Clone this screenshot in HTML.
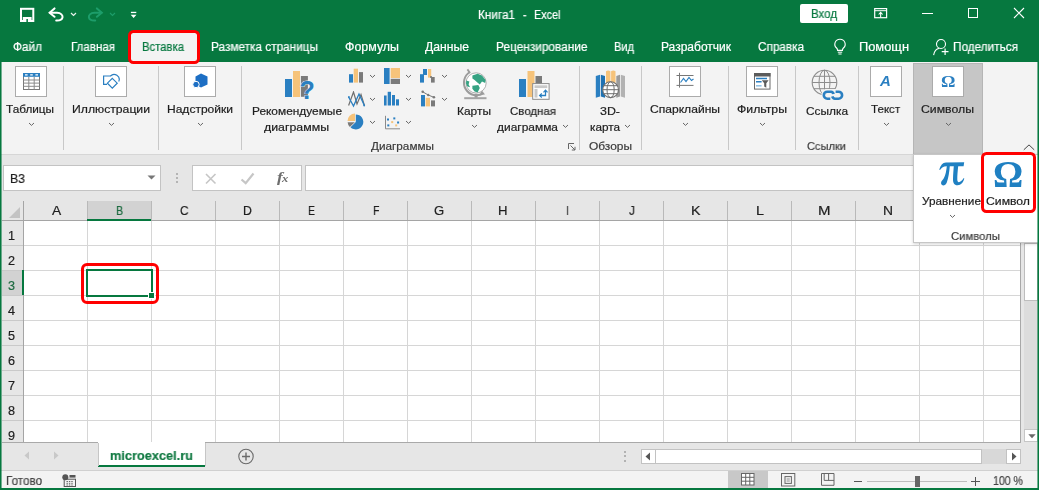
<!DOCTYPE html>
<html lang="ru"><head><meta charset="utf-8"><title>Excel</title>
<style>
html,body{margin:0;padding:0;background:#fff;}
body{width:1039px;height:490px;overflow:hidden;position:relative;font-family:"Liberation Sans",sans-serif;}
#r{position:absolute;left:0;top:0;width:1039px;height:490px;overflow:hidden;background:#fff;}
.b{position:absolute;display:block;margin:0;padding:0;}
.t{-webkit-text-stroke:0.2px currentColor;will-change:transform;position:absolute;display:block;white-space:nowrap;line-height:16px;height:16px;transform-origin:0 50%;font-family:"Liberation Sans",sans-serif;}
</style></head>
<body><div id="r">
<div class="b" style="left:0px;top:0px;width:1039px;height:62px;background:#06783f;"></div>
<div class="b" style="left:0px;top:62px;width:1039px;height:92px;background:#f3f3f3;"></div>
<div class="b" style="left:0px;top:154px;width:1039px;height:47px;background:#e6e6e6;"></div>
<div class="b" style="left:0px;top:154px;width:1039px;height:1px;background:#d6d6d6;"></div>
<div class="b" style="left:0px;top:201px;width:1039px;height:20px;background:#e6e6e6;"></div>
<div class="b" style="left:0px;top:221px;width:1039px;height:221px;background:#fff;"></div>
<div class="b" style="left:0px;top:442px;width:1039px;height:28px;background:#e6e6e6;"></div>
<div class="b" style="left:0px;top:470px;width:1039px;height:18px;background:#f3f3f3;"></div>
<svg class="b" style="left:19px;top:7px" width="16" height="16" viewBox="0 0 16 16"><rect x="2" y="1.8" width="12.3" height="12.2" fill="none" stroke="#fff" stroke-width="2"/><rect x="3.8" y="10" width="8.8" height="4.2" fill="#fff"/><rect x="7.4" y="12" width="1.5" height="3" fill="#06783f"/></svg>
<svg class="b" style="left:48px;top:7px" width="17" height="16" viewBox="0 0 17 16"><path d="M2 5.8 H9 C13 5.8 15 8.5 14.5 10.5 C14 12.5 11.5 13.7 8.2 13.5" fill="none" stroke="#fff" stroke-width="2" stroke-linecap="round"/><path d="M6.5 1.4 L1.6 5.8 L6.5 9.8" fill="none" stroke="#fff" stroke-width="2" stroke-linecap="round" stroke-linejoin="miter"/></svg>
<svg class="b" style="left:69.5px;top:12.05px" width="7" height="4.5" viewBox="0 0 7 4.5"><path d="M1 1 L3.5 3.5 L6 1" fill="none" stroke="#e8f2ec" stroke-width="1.2"/></svg>
<svg class="b" style="left:87px;top:7px" width="17" height="16" viewBox="0 0 17 16"><path d="M14.4 5.8 H7.4 C3.4 5.8 1.4 8.5 1.9 10.5 C2.4 12.5 4.9 13.7 8.2 13.5" fill="none" stroke="#1d9d6a" stroke-width="2" stroke-linecap="round"/><path d="M9.9 1.4 L14.8 5.8 L9.9 9.8" fill="none" stroke="#1d9d6a" stroke-width="2" stroke-linecap="round"/></svg>
<svg class="b" style="left:108.9px;top:12.05px" width="7" height="4.5" viewBox="0 0 7 4.5"><path d="M1 1 L3.5 3.5 L6 1" fill="none" stroke="#1d9d6a" stroke-width="1.1"/></svg>
<svg class="b" style="left:129px;top:10px" width="9" height="10" viewBox="0 0 9 10"><rect x="1.9" y="1.8" width="5.4" height="1.3" fill="#fff"/><path d="M1.7 4.8 H7.5 L4.6 8 Z" fill="#fff"/></svg>
<div class="b" style="left:800px;top:4px;width:48px;height:19px;background:#fff;border-radius:2px;"></div>
<svg class="b" style="left:874px;top:8px" width="14" height="11" viewBox="0 0 14 11"><rect x="0.7" y="0.6" width="11.9" height="9.1" fill="none" stroke="#fff" stroke-width="1.2"/><path d="M0.7 2.7 H12.6" stroke="#fff" stroke-width="1"/><path d="M6.65 9.2 V4.6 M4.7 6.5 L6.65 4.4 L8.6 6.5" fill="none" stroke="#fff" stroke-width="1.1"/></svg>
<div class="b" style="left:922px;top:13px;width:11px;height:1px;background:#fff;"></div>
<div class="b" style="left:968px;top:8px;width:10px;height:10px;border:1px solid #fff;box-sizing:border-box;"></div>
<svg class="b" style="left:1013px;top:7px" width="12" height="12" viewBox="0 0 12 12"><path d="M1 1 L11 11 M11 1 L1 11" stroke="#fff" stroke-width="1.1"/></svg>
<div class="b" style="left:131px;top:33px;width:66px;height:29px;background:#f3f3f3;"></div>
<svg class="b" style="left:833px;top:38px" width="14" height="18" viewBox="0 0 14 18"><path d="M7 1.2 A5 5 0 0 0 3.6 10 Q4.6 11 4.6 12.4 H9.4 Q9.4 11 10.4 10 A5 5 0 0 0 7 1.2 Z" fill="none" stroke="#fff" stroke-width="1.1"/><path d="M4.8 14.2 H9.2 M5.4 16 H8.6" stroke="#fff" stroke-width="1"/></svg>
<svg class="b" style="left:932px;top:38px" width="18" height="18" viewBox="0 0 18 18"><circle cx="9" cy="6" r="4.5" fill="none" stroke="#fff" stroke-width="1.1"/><path d="M1.6 17.2 Q2.6 11.2 7.4 10.3" fill="none" stroke="#fff" stroke-width="1.1"/><path d="M13.1 10.4 V17 M9.7 13.7 H16.5" stroke="#fff" stroke-width="1.2"/></svg>
<div class="b" style="left:63px;top:66px;width:1px;height:84px;background:#c8c8c8;"></div>
<div class="b" style="left:158px;top:66px;width:1px;height:84px;background:#c8c8c8;"></div>
<div class="b" style="left:241px;top:66px;width:1px;height:84px;background:#c8c8c8;"></div>
<div class="b" style="left:579px;top:66px;width:1px;height:84px;background:#c8c8c8;"></div>
<div class="b" style="left:641px;top:66px;width:1px;height:84px;background:#c8c8c8;"></div>
<div class="b" style="left:728px;top:66px;width:1px;height:84px;background:#c8c8c8;"></div>
<div class="b" style="left:795px;top:66px;width:1px;height:84px;background:#c8c8c8;"></div>
<div class="b" style="left:858px;top:66px;width:1px;height:84px;background:#c8c8c8;"></div>
<div class="b" style="left:913px;top:63px;width:70px;height:91px;background:#c6c6c6;border-left:1px solid #b5b5b5;border-right:1px solid #b5b5b5;border-top:1px solid #b5b5b5;box-sizing:border-box;"></div>
<div class="b" style="left:15px;top:66px;width:32px;height:31px;background:#fff;border:1px solid #ababab;box-sizing:border-box;"></div>
<div class="b" style="left:95px;top:66px;width:32px;height:31px;background:#fff;border:1px solid #ababab;box-sizing:border-box;"></div>
<div class="b" style="left:184px;top:66px;width:32px;height:31px;background:#fff;border:1px solid #ababab;box-sizing:border-box;"></div>
<div class="b" style="left:669px;top:66px;width:32px;height:31px;background:#fff;border:1px solid #ababab;box-sizing:border-box;"></div>
<div class="b" style="left:746px;top:66px;width:32px;height:31px;background:#fff;border:1px solid #ababab;box-sizing:border-box;"></div>
<div class="b" style="left:870px;top:66px;width:32px;height:31px;background:#fff;border:1px solid #ababab;box-sizing:border-box;"></div>
<div class="b" style="left:932px;top:66px;width:32px;height:31px;background:#fff;border:1px solid #ababab;box-sizing:border-box;"></div>
<svg class="b" style="left:27.5px;top:122.3px" width="7" height="4.4" viewBox="0 0 7 4.4"><path d="M1 1 L3.5 3.4 L6 1" fill="none" stroke="#646464" stroke-width="1"/></svg>
<svg class="b" style="left:107.5px;top:122.3px" width="7" height="4.4" viewBox="0 0 7 4.4"><path d="M1 1 L3.5 3.4 L6 1" fill="none" stroke="#646464" stroke-width="1"/></svg>
<svg class="b" style="left:196.5px;top:122.3px" width="7" height="4.4" viewBox="0 0 7 4.4"><path d="M1 1 L3.5 3.4 L6 1" fill="none" stroke="#646464" stroke-width="1"/></svg>
<svg class="b" style="left:681.5px;top:122.3px" width="7" height="4.4" viewBox="0 0 7 4.4"><path d="M1 1 L3.5 3.4 L6 1" fill="none" stroke="#646464" stroke-width="1"/></svg>
<svg class="b" style="left:758.5px;top:122.3px" width="7" height="4.4" viewBox="0 0 7 4.4"><path d="M1 1 L3.5 3.4 L6 1" fill="none" stroke="#646464" stroke-width="1"/></svg>
<svg class="b" style="left:882.5px;top:122.3px" width="7" height="4.4" viewBox="0 0 7 4.4"><path d="M1 1 L3.5 3.4 L6 1" fill="none" stroke="#646464" stroke-width="1"/></svg>
<svg class="b" style="left:944.5px;top:122.3px" width="7" height="4.4" viewBox="0 0 7 4.4"><path d="M1 1 L3.5 3.4 L6 1" fill="none" stroke="#646464" stroke-width="1"/></svg>
<svg class="b" style="left:470.5px;top:124.3px" width="7" height="4.4" viewBox="0 0 7 4.4"><path d="M1 1 L3.5 3.4 L6 1" fill="none" stroke="#646464" stroke-width="1"/></svg>
<svg class="b" style="left:561.7px;top:124.3px" width="7" height="4.4" viewBox="0 0 7 4.4"><path d="M1 1 L3.5 3.4 L6 1" fill="none" stroke="#646464" stroke-width="1"/></svg>
<svg class="b" style="left:623.7px;top:124.3px" width="7" height="4.4" viewBox="0 0 7 4.4"><path d="M1 1 L3.5 3.4 L6 1" fill="none" stroke="#646464" stroke-width="1"/></svg>
<svg class="b" style="left:368.5px;top:74.1px" width="7" height="4.4" viewBox="0 0 7 4.4"><path d="M1 1 L3.5 3.4 L6 1" fill="none" stroke="#646464" stroke-width="1"/></svg>
<svg class="b" style="left:404.5px;top:74.1px" width="7" height="4.4" viewBox="0 0 7 4.4"><path d="M1 1 L3.5 3.4 L6 1" fill="none" stroke="#646464" stroke-width="1"/></svg>
<svg class="b" style="left:440.5px;top:74.1px" width="7" height="4.4" viewBox="0 0 7 4.4"><path d="M1 1 L3.5 3.4 L6 1" fill="none" stroke="#646464" stroke-width="1"/></svg>
<svg class="b" style="left:368.5px;top:97.0px" width="7" height="4.4" viewBox="0 0 7 4.4"><path d="M1 1 L3.5 3.4 L6 1" fill="none" stroke="#646464" stroke-width="1"/></svg>
<svg class="b" style="left:404.5px;top:97.0px" width="7" height="4.4" viewBox="0 0 7 4.4"><path d="M1 1 L3.5 3.4 L6 1" fill="none" stroke="#646464" stroke-width="1"/></svg>
<svg class="b" style="left:440.5px;top:97.0px" width="7" height="4.4" viewBox="0 0 7 4.4"><path d="M1 1 L3.5 3.4 L6 1" fill="none" stroke="#646464" stroke-width="1"/></svg>
<svg class="b" style="left:368.5px;top:120.0px" width="7" height="4.4" viewBox="0 0 7 4.4"><path d="M1 1 L3.5 3.4 L6 1" fill="none" stroke="#646464" stroke-width="1"/></svg>
<svg class="b" style="left:404.5px;top:120.0px" width="7" height="4.4" viewBox="0 0 7 4.4"><path d="M1 1 L3.5 3.4 L6 1" fill="none" stroke="#646464" stroke-width="1"/></svg>
<svg class="b" style="left:1023px;top:144px" width="12" height="7" viewBox="0 0 12 7"><path d="M0.8 5.8 L6 0.9 L11.2 5.8" fill="none" stroke="#444" stroke-width="1"/></svg>
<svg class="b" style="left:568px;top:143px" width="8" height="8" viewBox="0 0 8 8"><path d="M0.5 6 V0.5 H6" fill="none" stroke="#666" stroke-width="1"/><path d="M2.5 2.5 L7 7 M7 3.8 V7 H3.8" fill="none" stroke="#666" stroke-width="1"/></svg>
<svg class="b" style="left:22.6px;top:72.6px" width="18" height="18" viewBox="0 0 18 18"><rect x="0.5" y="0.5" width="16" height="16" fill="#fff" stroke="#787878" stroke-width="1"/><rect x="0" y="0" width="17" height="3.8" fill="#2a7fc1"/><path d="M0.5 7 H16.5 M0.5 10.1 H16.5 M0.5 13.3 H16.5 M5.8 3.8 V16.5 M11.2 3.8 V16.5" stroke="#8a8a8a" stroke-width="1"/><path d="M2 1.9 H4.6 M7.2 1.9 H9.8 M12.4 1.9 H15" stroke="#fff" stroke-width="1.1"/></svg>
<svg class="b" style="left:102px;top:72px" width="18" height="18" viewBox="0 0 18 18"><path d="M8.8 4 H1.6 V12.3 H5" fill="none" stroke="#2a7fc1" stroke-width="1.2"/><path d="M8.4 4.2 A5 5 0 0 1 16.7 9.6" fill="none" stroke="#2a7fc1" stroke-width="1.2"/><path d="M10.3 6.3 L15.2 11.2 L10.3 16.1 L5.4 11.2 Z" fill="#fff" stroke="#2a7fc1" stroke-width="1.2"/></svg>
<svg class="b" style="left:192px;top:73px" width="17" height="16" viewBox="0 0 17 16"><path d="M9 0.5 L15.5 3.5 V11.5 L9 14.5 L3.5 11.5 V3.5 Z" fill="#1d6fc4"/><circle cx="4" cy="11.5" r="3.2" fill="#1d6fc4" stroke="#fff" stroke-width="1"/></svg>
<svg class="b" style="left:284px;top:70px" width="32" height="32" viewBox="0 0 32 32"><rect x="1" y="9" width="7" height="18" fill="#2a7fc1"/><rect x="9" y="1" width="7" height="26" fill="#f6c37a"/><rect x="16.9" y="6" width="7" height="20.8" fill="#7a7a7a"/><text x="15.5" y="29" font-family="Liberation Sans" font-weight="bold" font-size="25" fill="#2a7fc1" stroke="#f3f3f3" stroke-width="0.8" paint-order="stroke">?</text></svg>
<svg class="b" style="left:348px;top:68px" width="17" height="17" viewBox="0 0 17 17"><rect x="1" y="6.2" width="4" height="8.4" fill="#2a7fc1"/><rect x="5.7" y="0.7" width="4.3" height="13.9" fill="#f6c37a"/><rect x="11" y="4.1" width="4" height="10.5" fill="#7a7a7a"/></svg>
<svg class="b" style="left:383px;top:67px" width="18" height="18" viewBox="0 0 18 18"><rect x="1" y="1" width="5.6" height="16" fill="#2a7fc1"/><rect x="7.7" y="1" width="9.3" height="10" fill="#f6c37a"/><rect x="7.7" y="11.8" width="9.3" height="5.2" fill="#7a7a7a"/></svg>
<svg class="b" style="left:419px;top:68px" width="18" height="17" viewBox="0 0 18 17"><rect x="1" y="6.2" width="4" height="8.4" fill="#2a7fc1"/><rect x="4" y="1" width="4" height="6" fill="#2a7fc1"/><rect x="9" y="1" width="3.2" height="8.6" fill="#f6c37a"/><rect x="12" y="9" width="3.7" height="5.6" fill="#7a7a7a"/><rect x="11" y="8.2" width="2" height="1.6" fill="#7a7a7a"/></svg>
<svg class="b" style="left:347.5px;top:91px" width="18" height="17" viewBox="0 0 18 17"><path d="M0.6 14.5 L5.5 1 L9 13 L13 3.5 L16.4 14.5" fill="none" stroke="#6e6e6e" stroke-width="1.2"/><path d="M0.6 6 L5.5 15 L11 3 L16.4 14.5" fill="none" stroke="#2a7fc1" stroke-width="1.3"/><circle cx="0.9" cy="6" r="0.9" fill="#2a7fc1"/><circle cx="16.2" cy="14.6" r="0.9" fill="#2a7fc1"/></svg>
<svg class="b" style="left:383px;top:91px" width="17" height="16" viewBox="0 0 17 16"><rect x="1" y="4.5" width="2.6" height="10" fill="#2a7fc1"/><rect x="4.7" y="0.8" width="3.3" height="13.7" fill="#2a7fc1"/><rect x="9" y="4" width="3" height="10.5" fill="#2a7fc1"/><rect x="13" y="8.3" width="3" height="6.2" fill="#2a7fc1"/></svg>
<svg class="b" style="left:419px;top:90px" width="18" height="18" viewBox="0 0 18 18"><rect x="2" y="5" width="4" height="11.4" fill="#2a7fc1"/><rect x="6.7" y="7.8" width="4.3" height="8.6" fill="#f6c37a"/><rect x="12" y="10.4" width="4" height="6" fill="#7a7a7a"/><path d="M3.7 1.8 L9.2 5 L14.9 7.3" fill="none" stroke="#7a7a7a" stroke-width="1"/><circle cx="3.7" cy="1.8" r="1.3" fill="#7a7a7a"/><circle cx="9.2" cy="5" r="1.2" fill="#7a7a7a"/><circle cx="14.9" cy="7.3" r="1.3" fill="#7a7a7a"/></svg>
<svg class="b" style="left:347px;top:113px" width="18" height="18" viewBox="0 0 18 18"><path d="M8.8 8.9 L8.8 1.4 A7.5 7.5 0 1 1 3.5 14.2 Z" fill="#2a7fc1"/><path d="M8 8 L0.5 8 A7.5 7.5 0 0 1 8 0.5 Z" fill="#f6c37a"/><path d="M7.8 9.3 L0.6 9.3 A7.5 7.5 0 0 0 2.8 14 Z" fill="#7a7a7a"/></svg>
<svg class="b" style="left:383.7px;top:114.5px" width="18" height="16" viewBox="0 0 18 16"><path d="M1.5 0.8 V13.8 H16" fill="none" stroke="#8a8a8a" stroke-width="1"/><rect x="3" y="3.5" width="2" height="2" fill="#2a7fc1"/><rect x="7.2" y="6.1" width="2" height="2" fill="#f6c37a"/><rect x="9.3" y="2.4" width="2" height="2" fill="#2a7fc1"/><rect x="13.1" y="6.5" width="2" height="2" fill="#2a7fc1"/><rect x="3.3" y="9.4" width="2" height="2" fill="#2a7fc1"/><rect x="11.2" y="9.4" width="2" height="2" fill="#f6c37a"/></svg>
<svg class="b" style="left:460px;top:67px" width="30" height="34" viewBox="0 0 30 34"><path d="M9.8 5 A12.5 12.5 0 1 0 23.3 26.3" fill="none" stroke="#9c9c9c" stroke-width="2"/><path d="M7.4 2.4 L10 6" stroke="#9c9c9c" stroke-width="1.8"/><path d="M21.5 23 L25 27.5 L20 27.6 Z" fill="#9c9c9c"/><circle cx="16.1" cy="15.9" r="10.1" fill="#fff" stroke="#a8a8a8" stroke-width="0.9"/><path d="M12.4 8.4 L17.6 6.7 L22 8.4 L25.6 12.9 L25.2 15.9 L22 14.4 L19.8 17.4 L16.8 15.1 L14.6 12.9 L12.4 11.4 Z" fill="#36a383"/><path d="M12.4 18.8 L18.3 18.1 L19.8 21.1 L17.6 25.4 L14.6 24.6 L12.4 21.8 Z" fill="#36a383"/><path d="M6.3 13.6 L9.4 14.4 L8.6 17.4 L10.1 20.3 L7.3 19.6 L6 16.6 Z" fill="#36a383"/><rect x="14.6" y="26.8" width="3" height="4" fill="#9c9c9c"/><rect x="4.2" y="30.2" width="22.3" height="2" fill="#a4a4a4"/></svg>
<svg class="b" style="left:518px;top:70px" width="33" height="32" viewBox="0 0 33 32"><rect x="1" y="9" width="7" height="18" fill="#2a7fc1"/><rect x="9.5" y="1" width="7" height="26" fill="#f6c37a"/><rect x="17.5" y="6" width="6.5" height="8" fill="#7a7a7a"/><rect x="14.7" y="13.6" width="16.4" height="15.7" fill="#fff" stroke="#8a8a8a" stroke-width="1"/><rect x="16.5" y="15.3" width="12.8" height="2.8" fill="#c9c9c9"/><rect x="16.5" y="19" width="3" height="8.6" fill="#c9c9c9"/><path d="M22 25.5 H27.5 V20.5" fill="none" stroke="#2a7fc1" stroke-width="1.3"/><path d="M23.8 23.5 L21.6 25.5 L23.8 27.5 M25.5 22.4 L27.5 20.2 L29.5 22.4" fill="none" stroke="#2a7fc1" stroke-width="1.2"/></svg>
<svg class="b" style="left:595px;top:69px" width="31" height="30" viewBox="0 0 31 30"><path d="M0.8 7 L5 5.7 V27.5 L0.8 28.8 Z" fill="#2a7fc1"/><path d="M5.8 5.7 L10 7 V28.8 L5.8 27.5 Z" fill="#1f72b3"/><path d="M11 2.2 Q13.2 0.6 15.4 2.2 V21 H11 Z" fill="#f6c37a"/><path d="M16.1 2.2 Q18.3 0.6 20.5 2.2 V21 H16.1 Z" fill="#f6c37a"/><path d="M21.3 7 L25 5.7 V27.5 L21.3 28.8 Z" fill="#9b9b9b"/><path d="M25.8 5.7 L30 7 V28.8 L25.8 27.5 Z" fill="#b2b2b2"/><circle cx="15.6" cy="20.7" r="7.9" fill="#fff" stroke="#6e6e6e" stroke-width="1.1"/><ellipse cx="15.6" cy="20.7" rx="3.6" ry="7.9" fill="none" stroke="#6e6e6e" stroke-width="1"/><path d="M7.7 20.7 H23.5 M8.9 16.7 H22.3 M8.9 24.7 H22.3" stroke="#6e6e6e" stroke-width="1"/></svg>
<svg class="b" style="left:676px;top:72px" width="19" height="18" viewBox="0 0 19 18"><path d="M3.5 0.8 V15.6 M0.5 3.5 H17.5 M0.5 13.4 H17.5" fill="none" stroke="#777" stroke-width="1"/><path d="M4.5 10.5 L7.5 6.5 L10 9.5 L13 5.5 L15.5 8.5 L17.5 7" fill="none" stroke="#2a7fc1" stroke-width="1.1"/></svg>
<svg class="b" style="left:754px;top:72.5px" width="17" height="17" viewBox="0 0 17 17"><rect x="0.5" y="0.5" width="15.5" height="15.6" fill="#fff" stroke="#6a6a6a" stroke-width="1"/><rect x="0" y="0" width="16.5" height="3.5" fill="#5c5c5c"/><path d="M2 5.4 H13 M2 8.8 H7.6" stroke="#2a7fc1" stroke-width="1.5"/><path d="M2 12.8 H7.6" stroke="#8fc1e6" stroke-width="1.5"/><path d="M7.8 7.3 H14.6 L12.3 10.3 V14.7 L10.2 13.5 V10.3 Z" fill="#5c5c5c"/></svg>
<svg class="b" style="left:811px;top:69px" width="36" height="33" viewBox="0 0 36 33"><circle cx="13.5" cy="13.5" r="12.3" fill="#f3f3f3" stroke="#8c8c8c" stroke-width="1.1"/><ellipse cx="13.5" cy="13.5" rx="5.5" ry="12.3" fill="none" stroke="#8c8c8c" stroke-width="1"/><path d="M13.5 1.2 V25.8 M1.2 13.5 H25.8 M3 7.3 H24 M3 19.7 H24" stroke="#8c8c8c" stroke-width="1"/><rect x="10.5" y="20" width="23" height="13" rx="5" fill="#f3f3f3"/><path d="M19.3 29.7 H16.3 A3.2 3.2 0 0 1 16.3 22.7 H20 A3 3 0 0 1 22.6 25" fill="none" stroke="#2a7fc1" stroke-width="2.6"/><path d="M24.6 22.7 H27.6 A3.2 3.2 0 0 1 27.6 29.7 H24 A3 3 0 0 1 21.3 27.4" fill="none" stroke="#2a7fc1" stroke-width="2.6"/></svg>
<span class="b" style="left:880px;top:71px;font:bold italic 15px 'Liberation Sans',sans-serif;color:#2a7fc1;line-height:20px;will-change:transform">A</span>
<span class="b" style="left:941px;top:71.5px;font:bold 17px 'Liberation Serif',serif;color:#2a7fc1;line-height:20px;will-change:transform;transform-origin:0 0;transform:scaleX(1.06)">&#937;</span>
<div class="b" style="left:3px;top:165px;width:158px;height:25.5px;background:#fff;border:1px solid #c3c3c3;box-sizing:border-box;"></div>
<svg class="b" style="left:147px;top:175px" width="9" height="5" viewBox="0 0 9 5"><path d="M0.5 0.5 H8.5 L4.5 4.5 Z" fill="#777"/></svg>
<div class="b" style="left:176px;top:173px;width:2px;height:2px;background:#b4b4b4;"></div>
<div class="b" style="left:176px;top:177px;width:2px;height:2px;background:#b4b4b4;"></div>
<div class="b" style="left:176px;top:181px;width:2px;height:2px;background:#b4b4b4;"></div>
<div class="b" style="left:192px;top:165px;width:110px;height:25.5px;background:#fff;border:1px solid #c3c3c3;box-sizing:border-box;"></div>
<svg class="b" style="left:205px;top:172.5px" width="12" height="12" viewBox="0 0 12 12"><path d="M1 1 L10.5 10.5 M10.5 1 L1 10.5" stroke="#c6c6c6" stroke-width="1.6"/></svg>
<svg class="b" style="left:240px;top:172px" width="15" height="13" viewBox="0 0 15 13"><path d="M1.5 7.5 L5.7 11.2 L13.5 1.5" fill="none" stroke="#c6c6c6" stroke-width="2.2"/></svg>
<span class="b" style="left:277px;top:169.8px;font:bold italic 14px 'Liberation Serif',serif;color:#6e6e6e;letter-spacing:-0.6px;line-height:16px;will-change:transform;transform-origin:0 0;transform:scaleX(1.25)">f<span style="font-size:10px">x</span></span>
<div class="b" style="left:305px;top:165px;width:740px;height:25.5px;background:#fff;border:1px solid #c3c3c3;box-sizing:border-box;"></div>
<div class="b" style="left:0px;top:221px;width:23px;height:221px;background:#e6e6e6;"></div>
<div class="b" style="left:87px;top:201px;width:64px;height:20px;background:#d2d2d2;"></div>
<div class="b" style="left:2px;top:270px;width:21px;height:25px;background:#d2d2d2;"></div>
<svg class="b" style="left:8px;top:206px" width="13" height="13" viewBox="0 0 13 13"><path d="M12 1 V12 H1 Z" fill="#c3c3c3"/></svg>
<div class="b" style="left:23px;top:201px;width:1px;height:20px;background:#a5a5a5;"></div>
<div class="b" style="left:87px;top:201px;width:1px;height:20px;background:#b9b9b9;"></div>
<div class="b" style="left:151px;top:201px;width:1px;height:20px;background:#b9b9b9;"></div>
<div class="b" style="left:215px;top:201px;width:1px;height:20px;background:#b9b9b9;"></div>
<div class="b" style="left:279px;top:201px;width:1px;height:20px;background:#b9b9b9;"></div>
<div class="b" style="left:343px;top:201px;width:1px;height:20px;background:#b9b9b9;"></div>
<div class="b" style="left:407px;top:201px;width:1px;height:20px;background:#b9b9b9;"></div>
<div class="b" style="left:471px;top:201px;width:1px;height:20px;background:#b9b9b9;"></div>
<div class="b" style="left:535px;top:201px;width:1px;height:20px;background:#b9b9b9;"></div>
<div class="b" style="left:599px;top:201px;width:1px;height:20px;background:#b9b9b9;"></div>
<div class="b" style="left:663px;top:201px;width:1px;height:20px;background:#b9b9b9;"></div>
<div class="b" style="left:727px;top:201px;width:1px;height:20px;background:#b9b9b9;"></div>
<div class="b" style="left:791px;top:201px;width:1px;height:20px;background:#b9b9b9;"></div>
<div class="b" style="left:855px;top:201px;width:1px;height:20px;background:#b9b9b9;"></div>
<div class="b" style="left:919px;top:201px;width:1px;height:20px;background:#b9b9b9;"></div>
<div class="b" style="left:983px;top:201px;width:1px;height:20px;background:#b9b9b9;"></div>
<div class="b" style="left:2px;top:245px;width:21px;height:1px;background:#c9c9c9;"></div>
<div class="b" style="left:2px;top:270px;width:21px;height:1px;background:#c9c9c9;"></div>
<div class="b" style="left:2px;top:295px;width:21px;height:1px;background:#c9c9c9;"></div>
<div class="b" style="left:2px;top:320px;width:21px;height:1px;background:#c9c9c9;"></div>
<div class="b" style="left:2px;top:345px;width:21px;height:1px;background:#c9c9c9;"></div>
<div class="b" style="left:2px;top:370px;width:21px;height:1px;background:#c9c9c9;"></div>
<div class="b" style="left:2px;top:395px;width:21px;height:1px;background:#c9c9c9;"></div>
<div class="b" style="left:2px;top:420px;width:21px;height:1px;background:#c9c9c9;"></div>
<div class="b" style="left:2px;top:220px;width:1019px;height:1px;background:#a5a5a5;"></div>
<div class="b" style="left:87px;top:219px;width:64px;height:2px;background:#06783f;"></div>
<div class="b" style="left:23px;top:221px;width:1px;height:221px;background:#a5a5a5;"></div>
<div class="b" style="left:21.5px;top:270px;width:2px;height:25px;background:#06783f;"></div>
<div class="b" style="left:87px;top:221px;width:1px;height:221px;background:#d6d6d6;"></div>
<div class="b" style="left:151px;top:221px;width:1px;height:221px;background:#d6d6d6;"></div>
<div class="b" style="left:215px;top:221px;width:1px;height:221px;background:#d6d6d6;"></div>
<div class="b" style="left:279px;top:221px;width:1px;height:221px;background:#d6d6d6;"></div>
<div class="b" style="left:343px;top:221px;width:1px;height:221px;background:#d6d6d6;"></div>
<div class="b" style="left:407px;top:221px;width:1px;height:221px;background:#d6d6d6;"></div>
<div class="b" style="left:471px;top:221px;width:1px;height:221px;background:#d6d6d6;"></div>
<div class="b" style="left:535px;top:221px;width:1px;height:221px;background:#d6d6d6;"></div>
<div class="b" style="left:599px;top:221px;width:1px;height:221px;background:#d6d6d6;"></div>
<div class="b" style="left:663px;top:221px;width:1px;height:221px;background:#d6d6d6;"></div>
<div class="b" style="left:727px;top:221px;width:1px;height:221px;background:#d6d6d6;"></div>
<div class="b" style="left:791px;top:221px;width:1px;height:221px;background:#d6d6d6;"></div>
<div class="b" style="left:855px;top:221px;width:1px;height:221px;background:#d6d6d6;"></div>
<div class="b" style="left:919px;top:221px;width:1px;height:221px;background:#d6d6d6;"></div>
<div class="b" style="left:983px;top:221px;width:1px;height:221px;background:#d6d6d6;"></div>
<div class="b" style="left:24px;top:245px;width:997px;height:1px;background:#d6d6d6;"></div>
<div class="b" style="left:24px;top:270px;width:997px;height:1px;background:#d6d6d6;"></div>
<div class="b" style="left:24px;top:295px;width:997px;height:1px;background:#d6d6d6;"></div>
<div class="b" style="left:24px;top:320px;width:997px;height:1px;background:#d6d6d6;"></div>
<div class="b" style="left:24px;top:345px;width:997px;height:1px;background:#d6d6d6;"></div>
<div class="b" style="left:24px;top:370px;width:997px;height:1px;background:#d6d6d6;"></div>
<div class="b" style="left:24px;top:395px;width:997px;height:1px;background:#d6d6d6;"></div>
<div class="b" style="left:24px;top:420px;width:997px;height:1px;background:#d6d6d6;"></div>
<div class="b" style="left:1020px;top:201px;width:1px;height:241px;background:#a8a8a8;"></div>
<div class="b" style="left:1021px;top:201px;width:18px;height:241px;background:#e6e6e6;"></div>
<div class="b" style="left:1024.3px;top:201px;width:14px;height:241px;background:#dcdcdc;"></div>
<div class="b" style="left:1024.3px;top:243px;width:14px;height:58px;background:#fff;border:1px solid #bdbdbd;box-sizing:border-box;"></div>
<div class="b" style="left:1024.3px;top:428.6px;width:14px;height:13.6px;background:#fff;border:1px solid #c6c6c6;box-sizing:border-box;"></div>
<svg class="b" style="left:1027.6px;top:433.6px" width="8" height="5" viewBox="0 0 8 5"><path d="M0.3 0.3 H7.7 L4 4.2 Z" fill="#6a6a6a"/></svg>
<div class="b" style="left:86px;top:269px;width:67px;height:28px;border:2px solid #06783f;box-sizing:border-box;"></div>
<div class="b" style="left:148px;top:292px;width:7px;height:7px;background:#06783f;border:1px solid #fff;box-sizing:border-box;"></div>
<div class="b" style="left:2px;top:442px;width:1019px;height:1px;background:#a9a9a9;"></div>
<div class="b" style="left:98px;top:442px;width:107px;height:24px;background:#fff;"></div>
<div class="b" style="left:98px;top:465px;width:107px;height:2px;background:#06783f;"></div>
<div class="b" style="left:97.5px;top:443px;width:1px;height:23px;background:#c6c6c6;"></div>
<div class="b" style="left:204.5px;top:443px;width:1px;height:23px;background:#c6c6c6;"></div>
<svg class="b" style="left:24px;top:451px" width="6" height="9" viewBox="0 0 6 9"><path d="M5 0.5 V8.5 L0.5 4.5 Z" fill="#c8c8c8"/></svg>
<svg class="b" style="left:53px;top:451px" width="6" height="9" viewBox="0 0 6 9"><path d="M1 0.5 V8.5 L5.5 4.5 Z" fill="#c8c8c8"/></svg>
<svg class="b" style="left:236.6px;top:446.7px" width="18" height="18" viewBox="0 0 18 18"><circle cx="9" cy="9.5" r="7.2" fill="none" stroke="#6a6a6a" stroke-width="1.1"/><path d="M9 5.5 V13.5 M5 9.5 H13" stroke="#6a6a6a" stroke-width="1.4"/></svg>
<div class="b" style="left:623.5px;top:451px;width:2px;height:2px;background:#b2b2b2;"></div>
<div class="b" style="left:623.5px;top:455px;width:2px;height:2px;background:#b2b2b2;"></div>
<div class="b" style="left:623.5px;top:459.5px;width:2px;height:2px;background:#b2b2b2;"></div>
<div class="b" style="left:641px;top:449px;width:340.5px;height:14.5px;background:#fff;border:1px solid #c2c2c2;box-sizing:border-box;"></div>
<div class="b" style="left:655px;top:449px;width:1px;height:14.5px;background:#c2c2c2;"></div>
<svg class="b" style="left:645px;top:452px" width="6" height="9" viewBox="0 0 6 9"><path d="M5 0.5 V8.5 L0.5 4.5 Z" fill="#555"/></svg>
<div class="b" style="left:981.5px;top:449px;width:25px;height:14.5px;background:#d8d8d8;"></div>
<div class="b" style="left:1006px;top:449px;width:15px;height:14.5px;background:#fff;border:1px solid #c2c2c2;box-sizing:border-box;"></div>
<svg class="b" style="left:1011px;top:452px" width="6" height="9" viewBox="0 0 6 9"><path d="M1 0.5 V8.5 L5.5 4.5 Z" fill="#555"/></svg>
<div class="b" style="left:0px;top:469.5px;width:1039px;height:1px;background:#d0d0d0;"></div>
<svg class="b" style="left:62px;top:474px" width="14" height="13" viewBox="0 0 14 13"><circle cx="3.3" cy="3.3" r="3" fill="#555"/><rect x="7.5" y="1" width="6" height="2.6" fill="#555"/><rect x="2.2" y="5.2" width="11.3" height="7.3" fill="none" stroke="#555" stroke-width="1"/><path d="M4.5 7.5 H11.5 M4.5 9.3 H11.5 M4.5 11 H11.5" stroke="#555" stroke-width="0.9" stroke-dasharray="1.4 1"/></svg>
<div class="b" style="left:728px;top:471px;width:40px;height:17px;background:#c8c8c8;"></div>
<svg class="b" style="left:741px;top:473px" width="14" height="13" viewBox="0 0 14 13"><rect x="0.5" y="0.5" width="12.5" height="11.5" fill="#fff" stroke="#666" stroke-width="1"/><path d="M4.7 0.5 V12 M8.8 0.5 V12 M0.5 4.3 H13 M0.5 8.2 H13" stroke="#666" stroke-width="1"/></svg>
<svg class="b" style="left:780.5px;top:473px" width="15" height="14" viewBox="0 0 15 14"><rect x="0.5" y="0.5" width="13.3" height="12.5" fill="none" stroke="#666" stroke-width="1"/><rect x="4" y="3.6" width="6.4" height="6.8" fill="none" stroke="#666" stroke-width="1"/><path d="M5.6 6 H8.8 M5.6 8 H8.8" stroke="#777" stroke-width="0.8"/></svg>
<svg class="b" style="left:821px;top:473px" width="14" height="13" viewBox="0 0 14 13"><path d="M0.5 0.5 H13 V12.3 H0.5 Z" fill="none" stroke="#666" stroke-width="1"/><path d="M3.2 0.5 V7.4 H13 M7.6 0.5 V7.4" fill="none" stroke="#666" stroke-width="1"/></svg>
<div class="b" style="left:853.5px;top:480.5px;width:8px;height:1px;background:#555;"></div>
<div class="b" style="left:867px;top:480.5px;width:100px;height:1px;background:#bdbdbd;"></div>
<div class="b" style="left:915px;top:476px;width:5px;height:10.5px;background:#666;"></div>
<div class="b" style="left:971px;top:480.5px;width:9px;height:1px;background:#555;"></div>
<div class="b" style="left:975px;top:476.5px;width:1px;height:9px;background:#555;"></div>
<span class="t" id="t0" style="left:478px;top:6.5px;font-size:12px;color:#fff;transform:scaleX(0.9793)">Книга1</span>
<span class="t" id="t1" style="left:523px;top:6.5px;font-size:12px;color:#fff;transform:scaleX(0.8750)">-</span>
<span class="t" id="t2" style="left:533.5px;top:6.5px;font-size:12px;color:#fff;transform:scaleX(0.9031)">Excel</span>
<span class="t" id="t3" style="left:811px;top:6.0px;font-size:12px;color:#06783f;transform:scaleX(0.9574)">Вход</span>
<span class="t" id="t4" style="left:13px;top:39.0px;font-size:12px;color:#fff;transform:scaleX(0.9825)">Файл</span>
<span class="t" id="t5" style="left:71px;top:39.0px;font-size:12px;color:#fff;transform:scaleX(0.9631)">Главная</span>
<span class="t" id="t6" style="left:142px;top:39.0px;font-size:12px;color:#06783f;transform:scaleX(0.9415)">Вставка</span>
<span class="t" id="t7" style="left:211px;top:39.0px;font-size:12px;color:#fff;transform:scaleX(0.9828)">Разметка страницы</span>
<span class="t" id="t8" style="left:345px;top:39.0px;font-size:12px;color:#fff;transform:scaleX(1.0341)">Формулы</span>
<span class="t" id="t9" style="left:425px;top:39.0px;font-size:12px;color:#fff;transform:scaleX(1.0148)">Данные</span>
<span class="t" id="t10" style="left:496px;top:39.0px;font-size:12px;color:#fff;transform:scaleX(0.9874)">Рецензирование</span>
<span class="t" id="t11" style="left:614px;top:39.0px;font-size:12px;color:#fff;transform:scaleX(0.9209)">Вид</span>
<span class="t" id="t12" style="left:661px;top:39.0px;font-size:12px;color:#fff;transform:scaleX(1.0002)">Разработчик</span>
<span class="t" id="t13" style="left:758px;top:39.0px;font-size:12px;color:#fff;transform:scaleX(0.9771)">Справка</span>
<span class="t" id="t14" style="left:859px;top:39.0px;font-size:12px;color:#fff;transform:scaleX(1.0699)">Помощн</span>
<span class="t" id="t15" style="left:953px;top:39.0px;font-size:12px;color:#fff;transform:scaleX(0.9809)">Поделиться</span>
<span class="t" id="t16" style="left:6px;top:101.0px;font-size:11.6px;color:#1e1e1e;transform:scaleX(1.0139)">Таблицы</span>
<span class="t" id="t17" style="left:72px;top:101.0px;font-size:11.6px;color:#1e1e1e;transform:scaleX(1.0518)">Иллюстрации</span>
<span class="t" id="t18" style="left:167px;top:101.0px;font-size:11.6px;color:#1e1e1e;transform:scaleX(1.0373)">Надстройки</span>
<span class="t" id="t19" style="left:252px;top:103.0px;font-size:11.6px;color:#1e1e1e;transform:scaleX(1.0253)">Рекомендуемые</span>
<span class="t" id="t20" style="left:264px;top:119.0px;font-size:11.6px;color:#1e1e1e;transform:scaleX(1.0639)">диаграммы</span>
<span class="t" id="t21" style="left:457px;top:103.0px;font-size:11.6px;color:#1e1e1e;transform:scaleX(1.0288)">Карты</span>
<span class="t" id="t22" style="left:510px;top:103.0px;font-size:11.6px;color:#1e1e1e;transform:scaleX(0.9892)">Сводная</span>
<span class="t" id="t23" style="left:497px;top:119.0px;font-size:11.6px;color:#1e1e1e;transform:scaleX(1.0304)">диаграмма</span>
<span class="t" id="t24" style="left:600px;top:103.0px;font-size:11.6px;color:#1e1e1e;transform:scaleX(1.0702)">3D-</span>
<span class="t" id="t25" style="left:590px;top:119.0px;font-size:11.6px;color:#1e1e1e;transform:scaleX(1.0132)">карта</span>
<span class="t" id="t26" style="left:650px;top:101.0px;font-size:11.6px;color:#1e1e1e;transform:scaleX(1.0419)">Спарклайны</span>
<span class="t" id="t27" style="left:737px;top:101.0px;font-size:11.6px;color:#1e1e1e;transform:scaleX(1.0575)">Фильтры</span>
<span class="t" id="t28" style="left:806px;top:103.0px;font-size:11.6px;color:#1e1e1e;transform:scaleX(1.0232)">Ссылка</span>
<span class="t" id="t29" style="left:871px;top:101.0px;font-size:11.6px;color:#1e1e1e;transform:scaleX(0.9930)">Текст</span>
<span class="t" id="t30" style="left:921px;top:101.0px;font-size:11.6px;color:#1e1e1e;transform:scaleX(1.0570)">Символы</span>
<span class="t" id="t31" style="left:371px;top:138.0px;font-size:11.6px;color:#3b3b3b;transform:scaleX(1.0131)">Диаграммы</span>
<span class="t" id="t32" style="left:589px;top:138.0px;font-size:11.6px;color:#3b3b3b;transform:scaleX(1.0280)">Обзоры</span>
<span class="t" id="t33" style="left:807px;top:138.0px;font-size:11.6px;color:#3b3b3b;transform:scaleX(0.9552)">Ссылки</span>
<span class="t" id="t37" style="left:10px;top:170.7px;font-size:12.5px;color:#1e1e1e;transform:scaleX(0.9806)">B3</span>
<span class="t" id="t38" style="left:51.5px;top:203.0px;font-size:12.3px;color:#1e1e1e;transform:scaleX(1.1215)">A</span>
<span class="t" id="t39" style="left:115.8px;top:203.0px;font-size:12.3px;color:#1e6b41;transform:scaleX(0.8777)">B</span>
<span class="t" id="t40" style="left:180px;top:203.0px;font-size:12.3px;color:#1e1e1e;transform:scaleX(0.9561)">C</span>
<span class="t" id="t41" style="left:242.8px;top:203.0px;font-size:12.3px;color:#1e1e1e;transform:scaleX(1.0011)">D</span>
<span class="t" id="t42" style="left:307.8px;top:203.0px;font-size:12.3px;color:#1e1e1e;transform:scaleX(0.8411)">E</span>
<span class="t" id="t43" style="left:372.8px;top:203.0px;font-size:12.3px;color:#1e1e1e;transform:scaleX(0.8516)">F</span>
<span class="t" id="t44" style="left:434px;top:203.0px;font-size:12.3px;color:#1e1e1e;transform:scaleX(1.0649)">G</span>
<span class="t" id="t45" style="left:498px;top:203.0px;font-size:12.3px;color:#1e1e1e;transform:scaleX(1.0685)">H</span>
<span class="t" id="t46" style="left:566.2px;top:203.0px;font-size:12.3px;color:#1e1e1e;transform:scaleX(0.7890)">I</span>
<span class="t" id="t47" style="left:628.6px;top:203.0px;font-size:12.3px;color:#1e1e1e;transform:scaleX(0.9421)">J</span>
<span class="t" id="t48" style="left:691px;top:203.0px;font-size:12.3px;color:#1e1e1e;transform:scaleX(1.1581)">K</span>
<span class="t" id="t49" style="left:756px;top:203.0px;font-size:12.3px;color:#1e1e1e;transform:scaleX(1.1689)">L</span>
<span class="t" id="t50" style="left:818px;top:203.0px;font-size:12.3px;color:#1e1e1e;transform:scaleX(1.2195)">M</span>
<span class="t" id="t51" style="left:883px;top:203.0px;font-size:12.3px;color:#1e1e1e;transform:scaleX(1.1248)">N</span>
<span class="t" id="t52" style="left:7.6px;top:227.5px;font-size:12.6px;color:#1e1e1e;transform:scaleX(0.9978)">1</span>
<span class="t" id="t53" style="left:7.6px;top:252.5px;font-size:12.6px;color:#1e1e1e;transform:scaleX(0.9978)">2</span>
<span class="t" id="t54" style="left:7.6px;top:277.5px;font-size:12.6px;color:#1e6b41;transform:scaleX(0.9978)">3</span>
<span class="t" id="t55" style="left:7.6px;top:302.5px;font-size:12.6px;color:#1e1e1e;transform:scaleX(0.9978)">4</span>
<span class="t" id="t56" style="left:7.6px;top:327.5px;font-size:12.6px;color:#1e1e1e;transform:scaleX(0.9978)">5</span>
<span class="t" id="t57" style="left:7.6px;top:352.5px;font-size:12.6px;color:#1e1e1e;transform:scaleX(0.9978)">6</span>
<span class="t" id="t58" style="left:7.6px;top:377.5px;font-size:12.6px;color:#1e1e1e;transform:scaleX(0.9978)">7</span>
<span class="t" id="t59" style="left:7.6px;top:402.5px;font-size:12.6px;color:#1e1e1e;transform:scaleX(0.9978)">8</span>
<span class="t" id="t60" style="left:7.6px;top:427.5px;font-size:12.6px;color:#1e1e1e;transform:scaleX(0.9978)">9</span>
<span class="t" id="t61" style="left:110px;top:447.5px;font-size:13.5px;color:#127a43;font-weight:bold;transform:scaleX(0.9454)">microexcel.ru</span>
<span class="t" id="t62" style="left:6px;top:473.0px;font-size:12px;color:#444;transform:scaleX(0.9713)">Готово</span>
<span class="t" id="t63" style="left:993px;top:473.0px;font-size:12px;color:#444;transform:scaleX(0.8815)">100 %</span>
<div class="b" style="left:913px;top:154px;width:140px;height:89px;background:#fff;border:1px solid #c6c6c6;box-sizing:border-box;box-shadow:0 1px 3px rgba(0,0,0,.18);"></div>
<svg class="b" style="left:938.5px;top:161.5px" width="26" height="24" viewBox="0 0 26 24"><g fill="#1f80c2"><path d="M0.3 7.8 C1.5 3.5 3.5 0.6 7 0.5 L25.2 0.3 L24.6 4.2 L7.5 4.2 C4.5 4.2 2.5 5.5 1.0 8.0 Z"/><path d="M7.8 4 L10.8 4 C10.3 10 9.5 16 7.8 20.5 C6.8 23 4.5 24 3 23 C1.5 22 1.8 19.5 3.5 18 C6 15.5 7.3 10 7.8 4 Z"/><path d="M14.8 4 L19.2 4 C18.7 9 18.2 14 18.3 17.5 C18.4 20 19.5 20.6 21 19.8 C22.8 18.8 24 17.5 24.7 16 L25.3 16.5 C24.5 20 22 23.2 18.7 23.3 C15 23.4 13.9 20.5 14 17 C14.1 13 14.5 8 14.8 4 Z"/></g></svg>
<span class="b" id="bigomega" style="left:992.7px;top:155.5px;font:bold 37px 'Liberation Serif',serif;color:#1f80c2;line-height:38px;will-change:transform;transform-origin:0 0;transform:scaleX(1.02)">&#937;</span>
<svg class="b" style="left:948.5px;top:214.20000000000002px" width="7" height="4.4" viewBox="0 0 7 4.4"><path d="M1 1 L3.5 3.4 L6 1" fill="none" stroke="#646464" stroke-width="1"/></svg>
<span class="t" id="t34" style="left:922px;top:193.0px;font-size:11.6px;color:#1e1e1e;transform:scaleX(1.0159)">Уравнение</span>
<span class="t" id="t35" style="left:986px;top:193.0px;font-size:11.6px;color:#1e1e1e;transform:scaleX(1.0523)">Символ</span>
<span class="t" id="t36" style="left:951px;top:228.0px;font-size:11.6px;color:#3b3b3b;transform:scaleX(0.9773)">Символы</span>
<div class="b" style="left:128px;top:30px;width:72px;height:34px;border:3px solid #ff0000;box-sizing:border-box;border-radius:5.5px;"></div>
<div class="b" style="left:81px;top:263px;width:78px;height:41px;border:3px solid #ff0000;box-sizing:border-box;border-radius:6px;"></div>
<div class="b" style="left:981px;top:152px;width:55px;height:61px;border:3px solid #ff0000;box-sizing:border-box;border-radius:5.5px;"></div>
<div class="b" style="left:0px;top:62px;width:1px;height:428px;background:#06783f;"></div>
<div class="b" style="left:1px;top:62px;width:1px;height:428px;background:rgba(6,120,63,0.55);"></div>
<div class="b" style="left:1038px;top:62px;width:1px;height:428px;background:#06783f;"></div>
<div class="b" style="left:1037px;top:62px;width:1px;height:428px;background:rgba(6,120,63,0.55);"></div>
<div class="b" style="left:0px;top:488px;width:1039px;height:2px;background:#06783f;"></div>
</div></body></html>
